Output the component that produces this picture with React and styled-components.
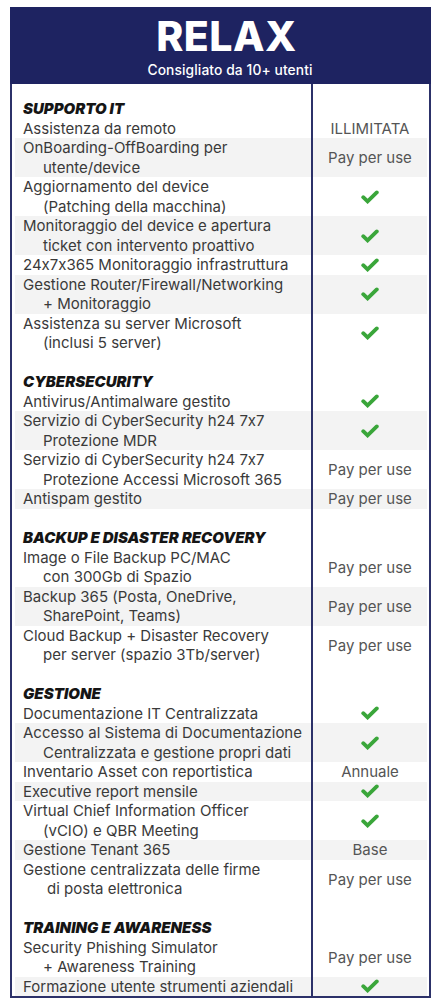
import React from 'react';
import styled, { createGlobalStyle } from 'styled-components';

const GlobalStyle = createGlobalStyle`
  html, body { margin: 0; padding: 0; background: #ffffff; }
  body {
    font-family: Inter, "Noto Sans", sans-serif;
    font-feature-settings: "calt" 0;
  }
`;

const Card = styled.div`
  margin: 7px 0 0 10px;
  width: 421px;
`;

const Header = styled.header`
  background: #1e2361;
  height: 77px;
  box-sizing: border-box;
  padding-top: 9px;
  display: flex;
  flex-direction: column;
  align-items: center;
  color: #ffffff;
`;

const Title = styled.h1`
  margin: 0 0 0 12px;
  font-family: Inter, sans-serif;
  font-weight: 800;
  font-size: 41px;
  line-height: 41px;
  letter-spacing: 0.5px;
`;

const Subtitle = styled.div`
  margin: 5px 0 0 19px;
  font-family: Inter, sans-serif;
  font-weight: 500;
  font-size: 13.8px;
  line-height: 16px;
  letter-spacing: 0.1px;
`;

const Body = styled.div`
  border: 2px solid #2c3169;
  border-top: none;
`;

const Row = styled.div`
  display: grid;
  grid-template-columns: 296px 1fr;
  margin: 0 2px 0 3px;
  background: ${(p) => (p.$striped ? '#f3f3f3' : 'transparent')};
`;

const Label = styled.div`
  padding-left: 8px;
  font-size: 15px;
  line-height: 19.5px;
  color: #3a3a3a;
  white-space: nowrap;
  transform: translateY(-0.5px);
`;

const Line = styled.div`
  padding-left: ${(p) => p.$indent || 0}px;
`;

const SectionTitle = styled.div`
  padding-left: 8px;
  padding-top: ${(p) => p.$top}px;
  font-size: 15px;
  line-height: 19.5px;
  font-weight: 900;
  font-style: italic;
  color: #151515;
`;

const Value = styled.div`
  border-left: 2px solid #2c3169;
  display: flex;
  align-items: center;
  justify-content: center;
  font-size: 15px;
  color: #555555;
  white-space: nowrap;
`;

const CheckSvg = styled.svg`
  width: 18px;
  height: 14px;
  display: block;
`;

const Check = () => (
  <CheckSvg viewBox="0 0 18 14" aria-hidden="true">
    <path
      d="M2.2 7.2 L6.6 11.4 L15.8 2.4"
      fill="none"
      stroke="#3aa63a"
      strokeWidth="3.8"
      strokeLinecap="round"
      strokeLinejoin="miter"
    />
  </CheckSvg>
);

const CHECK = 'check';

const sections = [
  {
    title: 'SUPPORTO IT',
    rows: [
      { label: ['Assistenza da remoto'], value: 'ILLIMITATA' },
      { label: ['OnBoarding-OffBoarding per', 'utente/device'], value: 'Pay per use' },
      { label: ['Aggiornamento del device', '(Patching della macchina)'], value: CHECK },
      { label: ['Monitoraggio del device e apertura', 'ticket con intervento proattivo'], value: CHECK },
      { label: ['24x7x365 Monitoraggio infrastruttura'], value: CHECK },
      { label: ['Gestione Router/Firewall/Networking', '+ Monitoraggio'], value: CHECK },
      { label: ['Assistenza su server Microsoft', '(inclusi 5 server)'], value: CHECK },
    ],
  },
  {
    title: 'CYBERSECURITY',
    rows: [
      { label: ['Antivirus/Antimalware gestito'], value: CHECK },
      { label: ['Servizio di CyberSecurity h24 7x7', 'Protezione MDR'], value: CHECK },
      { label: ['Servizio di CyberSecurity h24 7x7', 'Protezione Accessi Microsoft 365'], value: 'Pay per use' },
      { label: ['Antispam gestito'], value: 'Pay per use' },
    ],
  },
  {
    title: 'BACKUP E DISASTER RECOVERY',
    rows: [
      { label: ['Image o File Backup PC/MAC', 'con 300Gb di Spazio'], value: 'Pay per use' },
      { label: ['Backup 365 (Posta, OneDrive,', 'SharePoint, Teams)'], value: 'Pay per use' },
      { label: ['Cloud Backup + Disaster Recovery', 'per server (spazio 3Tb/server)'], value: 'Pay per use' },
    ],
  },
  {
    title: 'GESTIONE',
    rows: [
      { label: ['Documentazione IT Centralizzata'], value: CHECK },
      { label: ['Accesso al Sistema di Documentazione', 'Centralizzata e gestione propri dati'], value: CHECK },
      { label: ['Inventario Asset con reportistica'], value: 'Annuale' },
      { label: ['Executive report mensile'], value: CHECK },
      { label: ['Virtual Chief Information Officer', '(vCIO) e QBR Meeting'], value: CHECK },
      { label: ['Gestione Tenant 365'], value: 'Base' },
      { label: ['Gestione centralizzata delle firme', 'di posta elettronica'], value: 'Pay per use', indent: 24 },
    ],
  },
  {
    title: 'TRAINING E AWARENESS',
    rows: [
      { label: ['Security Phishing Simulator', '+ Awareness Training'], value: 'Pay per use' },
      { label: ['Formazione utente strumenti aziendali'], value: CHECK },
    ],
  },
];

export default function App() {
  return (
    <>
      <GlobalStyle />
      <Card>
        <Header>
          <Title>RELAX</Title>
          <Subtitle>Consigliato da 10+ utenti</Subtitle>
        </Header>
        <Body>
          {sections.map((section, si) => (
            <React.Fragment key={section.title}>
              <Row>
                <SectionTitle $top={si === 0 ? 15 : 19.5}>{section.title}</SectionTitle>
                <Value />
              </Row>
              {section.rows.map((row, ri) => (
                <Row key={ri} $striped={ri % 2 === 1}>
                  <Label>
                    {row.label.map((line, li) => (
                      <Line key={li} $indent={li > 0 ? row.indent || 20 : 0}>
                        {line}
                      </Line>
                    ))}
                  </Label>
                  <Value>{row.value === CHECK ? <Check /> : row.value}</Value>
                </Row>
              ))}
            </React.Fragment>
          ))}
        </Body>
      </Card>
    </>
  );
}
